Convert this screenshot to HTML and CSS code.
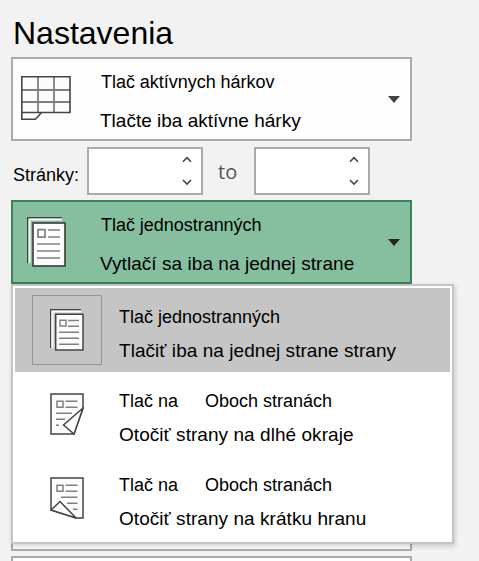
FILE: index.html
```html
<!DOCTYPE html>
<html lang="sk">
<head>
<meta charset="utf-8">
<title>Nastavenia</title>
<link rel="stylesheet" href="styles.css">
</head>
<body>
<main class="panel">
  <h1 class="title">Nastavenia</h1>
  <section class="card">
    <svg class="sheet-icon" width="50" height="45" viewBox="0 0 50 45" fill="none">
      <path d="M1 1H49V36H1ZM1 36V43H15L21 36" fill="#fcfcfc"/>
      <path d="M17 1V36M33 1V36M1 14H49M1 26H49" stroke="#80807c" stroke-width="1.8"/>
      <path d="M.8 .8H49V36.5H.8ZM.8 36V43.2H14.5L20.5 36.5" stroke="#444" stroke-width="1.6"/>
    </svg>
    <div class="text"><p class="name">Tlač aktívnych hárkov</p><p class="hint">Tlačte iba aktívne hárky</p></div>
    <i class="arrow"></i>
  </section>
  <div class="range">
    <span class="label">Stránky:</span>
    <div class="spin">
      <svg width="10" height="30" viewBox="0 0 10 30"><path d="M1 5.7 5 1.7 9 5.7M1 24 5 28 9 24"/></svg>
    </div>
    <span class="to">to</span>
    <div class="spin">
      <svg width="10" height="30" viewBox="0 0 10 30"><path d="M1 5.7 5 1.7 9 5.7M1 24 5 28 9 24"/></svg>
    </div>
  </div>
  <section class="card active">
    <svg class="pages-icon" width="39" height="50" viewBox="0 0 39 50">
      <path d="M0 0H35V1.500H1.500V46H0Z" fill="#444"/>
      <path d="M1.500 1.500H35V3.500H3.500V46H1.500Z" fill="#fcfcfc"/>
      <rect x="6" y="6" width="32" height="43" fill="#fcfcfc" stroke="#444" stroke-width="1.7"/>
      <path d="M11 12.700h7v7.500h-7zM21 13h12M21 20h12M10 27h23M10 34h23M10 41h23" fill="none" stroke="#80807c" stroke-width="1.7"/>
    </svg>
    <div class="text"><p class="name">Tlač jednostranných</p><p class="hint">Vytlačí sa iba na jednej strane</p></div>
    <i class="arrow"></i>
  </section>
  <div class="under"></div>
  <div class="next"></div>
  <div class="menu">
    <div class="item selected">
      <span class="icon"><svg width="34" height="42" viewBox="0 0 34 42">
        <path d="M0 0H31V1.400H1.400V39H0Z" fill="#444"/>
        <path d="M1.400 1.400H31V3.400H3.400V39H1.400Z" fill="#fcfcfc"/>
        <path d="M5.700 5.300H33V41H5.700Z" fill="#fcfcfc" stroke="#444" stroke-width="1.5"/>
        <path d="M10 11.200h6v5.800h-6zM18 11.400h11M18 17.200h11M9 23.300h20M9 29.300h20M9 35.300h20" fill="none" stroke="#80807c" stroke-width="1.5"/>
      </svg></span>
      <div class="text"><p class="name">Tlač jednostranných</p><p class="hint">Tlačiť iba na jednej strane strany</p></div>
    </div>
    <div class="item">
      <span class="icon"><svg width="34" height="42" viewBox="0 0 34 42">
        <path d="M1 1H33V15L24 41H1Z" fill="#fcfcfc" stroke="#444" stroke-width="1.5"/>
        <path d="M7 8.300h6v6h-6zM15.500 8.300h12M15.500 14.300h12M6 20.300h16M6 26.300h9M6 32.300h3" fill="none" stroke="#80807c" stroke-width="1.5"/>
        <path d="M33 15 13.500 32 24 41Z" fill="#fcfcfc" stroke="#444" stroke-width="1.5"/>
      </svg></span>
      <div class="text"><p class="name"><span class="lead">Tlač na</span>Oboch stranách</p><p class="hint">Otočiť strany na dlhé okraje</p></div>
    </div>
    <div class="item">
      <span class="icon"><svg width="34" height="42" viewBox="0 0 34 42">
        <path d="M1 1H33V41H26L1 33Z" fill="#fcfcfc" stroke="#444" stroke-width="1.5"/>
        <path d="M7 8.300h6v6h-6zM15.500 8.300h12M15.500 14.300h12M11 20.300h16.500M17 26.300h10.500M23 32.300h4.500" fill="none" stroke="#80807c" stroke-width="1.5"/>
        <path d="M1 33 10 24.500 26 41Z" fill="#fcfcfc" stroke="#444" stroke-width="1.5"/>
      </svg></span>
      <div class="text"><p class="name"><span class="lead">Tlač na</span>Oboch stranách</p><p class="hint">Otočiť strany na krátku hranu</p></div>
    </div>
  </div>
</main>
</body>
</html>
```
FILE: styles.css
```css
* { box-sizing: border-box; }
body {
  margin: 0;
  height: 561px;
  overflow: hidden;
  background: #f2f2f2;
  color: #000;
  font-family: "Liberation Sans", Arial, sans-serif;
}
h1, p { margin: 0; }
.panel { position: relative; height: 561px; padding: 15px 0 0 11px; overflow: hidden; }
.title { height: 42px; padding-left: 2px; font-size: 32px; line-height: 36px; font-weight: 400; }
.card {
  display: flex;
  width: 401px;
  height: 84px;
  border: 2px solid #ababab;
  background: #fdfdfd;
}
.card > svg { flex: none; }
.sheet-icon { margin: 17px 0 0 8px; }
.pages-icon { margin: 15px 0 0 14px; }
.card .text { width: 275px; margin: 12px 0 0 30px; }
.card.active .text { width: 276px; margin-left: 34px; }
.name, .hint { white-space: nowrap; }
.name { font-size: 18px; line-height: 22px; }
.hint { font-size: 19px; line-height: 22px; letter-spacing: .05px; }
.card .name { letter-spacing: -.03px; }
.card .hint { margin: 17px 0 0 -1px; letter-spacing: 0; }
.active .name { padding-left: 1px; }
.card.active .hint { margin-left: 0; letter-spacing: .05px; }
.active { border-color: #3f8159; background: #86bfa0; }
.arrow {
  width: 0;
  height: 0;
  margin: 37px 0 0 12px;
  border: 6.5px solid transparent;
  border-top: 7px solid #444;
  border-bottom: 0;
}
.active .arrow { border-top-color: #262626; }
.range { display: flex; height: 59px; padding-top: 6px; }
.label { width: 76px; padding: 17px 0 0 2px; font-size: 18px; line-height: 22px; }
.spin {
  width: 116px;
  height: 48px;
  padding: 7px 0 0 93px;
  border: 2px solid #ababab;
  background: #fff;
}
.spin svg { display: block; fill: none; stroke: #444; stroke-width: 1.6; }
.to {
  width: 51px;
  padding: 11px 0 0 15px;
  color: #555;
  font: 20px/28px "Open Sans", sans-serif;
}
.under { width: 401px; height: 267px; border: 2px solid #ababab; background: #fdfdfd; }
.next { width: 401px; height: 20px; margin-top: 5px; border: 2px solid #ababab; background: #fdfdfd; }
.menu {
  position: absolute;
  left: 11px;
  top: 284px;
  width: 443px;
  height: 260px;
  padding: 2px;
  border: 2px solid #c4c4c4;
  background: #fff;
  box-shadow: 1px 2px 5px rgba(0, 0, 0, .18);
}
.item { display: flex; height: 84px; padding-left: 17px; }
.selected { background: #c5c5c5; }
.icon {
  width: 70px;
  height: 70px;
  margin-top: 7px;
  padding: 13px 0 0 17px;
  border: 1px solid transparent;
}
.selected .icon { border-color: #969696; }
.icon svg { display: block; }
.item .text { padding: 18px 0 0 17px; }
.item .hint { margin-top: 12px; }
.lead { display: inline-block; width: 86px; }
```
